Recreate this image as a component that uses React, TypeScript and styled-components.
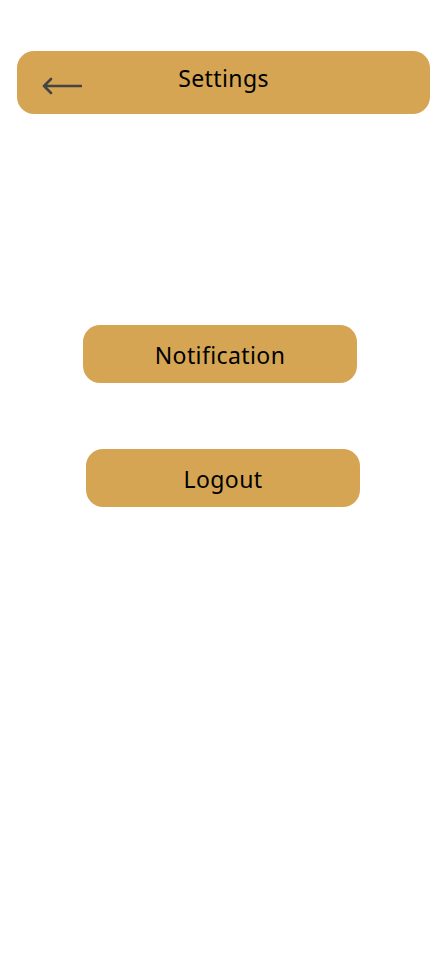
import React from "react";
import styled, { createGlobalStyle } from "styled-components";

const Global = createGlobalStyle`
  html, body { margin: 0; padding: 0; background: #ffffff; }
  body { font-family: "Noto Sans", "Open Sans", sans-serif; }
`;

const Page = styled.div`
  width: 440px;
  min-height: 956px;
  display: flex;
  flex-direction: column;
  padding-top: 51px;
  box-sizing: border-box;
`;

const Header = styled.header`
  margin: 0 10px 0 17px;
  height: 63px;
  background: #d5a553;
  border-radius: 17px;
  display: grid;
  grid-template-columns: 1fr auto 1fr;
  align-items: center;
`;

const BackButton = styled.button`
  justify-self: start;
  margin-left: 25px;
  margin-top: 6px;
  padding: 0;
  border: none;
  background: transparent;
  display: flex;
  cursor: pointer;
`;

const Title = styled.h1`
  margin: 0 0 10px;
  font-size: 23px;
  letter-spacing: 0.4px;
  font-weight: 400;
  color: #000;
`;

const Menu = styled.nav`
  display: flex;
  flex-direction: column;
  gap: 66px;
  margin-top: 211px;
`;

const MenuButton = styled.button<{ $left: number }>`
  margin-left: ${(p) => p.$left}px;
  width: 274px;
  height: 58px;
  border: none;
  border-radius: 17px;
  background: #d5a553;
  font-family: "Noto Sans", "Open Sans", sans-serif;
  font-size: 23px;
  letter-spacing: 0.4px;
  color: #000;
  padding: 1px 0 0;
  cursor: pointer;
`;

export default function App() {
  return (
    <>
      <Global />
      <Page>
        <Header>
          <BackButton aria-label="Back">
            <svg width="40" height="18" viewBox="0 0 40 18" fill="none">
              <path d="M39 9H2M9 2L2 9l7 7" stroke="#444" strokeWidth="2.6" strokeLinecap="round" strokeLinejoin="round" />
            </svg>
          </BackButton>
          <Title>Settings</Title>
          <span />
        </Header>
        <Menu>
          <MenuButton $left={83}>Notification</MenuButton>
          <MenuButton $left={86}>Logout</MenuButton>
        </Menu>
      </Page>
    </>
  );
}
